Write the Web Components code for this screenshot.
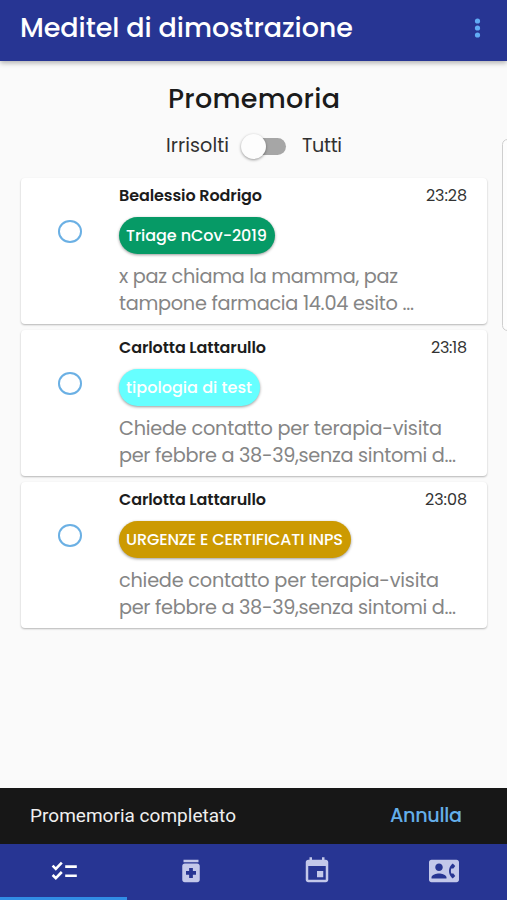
<!DOCTYPE html>
<html lang="it">
<head>
<meta charset="utf-8">
<title>Meditel di dimostrazione</title>
<style>
    html, body{
        margin: 0;
        height: 100%;
        overflow: hidden;
        background-color: #fafafa;
        font-family: Poppins, Inter, "Open Sans", sans-serif;
    }
</style>
</head>
<body>
<meditel-app></meditel-app>

<script>
function makeTemplate(html){
    const template = document.createElement('template')
    template.innerHTML = html
    return template
}

class BaseElement extends HTMLElement {
    constructor(){
        super();
        this.attachShadow({mode: 'open'});
        this.shadowRoot.appendChild(this.constructor.template.content.cloneNode(true));
    }
}

/* One line of text, tracked so that it takes up the given width */
class FitText extends BaseElement {
    static template = makeTemplate(`
        <style>
        :host{
            display: inline-block;
            white-space: nowrap;
        }
        span{
            display: inline-block;
        }
        </style>
        <span><slot></slot></span>
    `)

    connectedCallback(){
        const span = this.shadowRoot.querySelector('span');
        const width = Number(this.getAttribute('width'));
        const count = this.textContent.length;
        const spacing = (width - span.getBoundingClientRect().width) / (count - 1);
        span.style.letterSpacing = spacing + 'px';
        span.style.marginRight = -spacing + 'px';
    }
}

class AppBar extends BaseElement {
    static template = makeTemplate(`
        <style>
        :host{
            display: flex;
            justify-content: space-between;
            align-items: center;
            box-sizing: border-box;
            height: 61px;
            padding: 0 26px 5px 20px;
            background-color: #273593;
            color: #fff;
            font-size: 27px;
            font-weight: 500;
            line-height: 36px;
            box-shadow: 0 2px 5px rgba(0,0,0,0.3);
            z-index: 1;
        }
        svg{
            display: block;
            fill: #61acf5;
        }
        </style>
        <slot></slot>
        <svg width="7" height="20" viewBox="0 0 7 20">
            <circle cx="3.5" cy="3" r="2.6"/>
            <circle cx="3.5" cy="10" r="2.6"/>
            <circle cx="3.5" cy="17" r="2.6"/>
        </svg>
    `)
}

class FilterSwitch extends BaseElement {
    static template = makeTemplate(`
        <style>
        :host{
            display: flex;
            justify-content: center;
            align-items: center;
            height: 26px;
            font-size: 19.2px;
            line-height: 26px;
            color: #303030;
        }
        .track{
            display: flex;
            align-items: center;
            width: 41px;
            height: 17px;
            margin: 0 16px 0 16px;
            border-radius: 9px;
            background-color: #a6a6a6;
        }
        .thumb{
            flex: none;
            width: 25px;
            height: 25px;
            margin-left: -4px;
            border-radius: 50%;
            background-color: #fdfdfd;
            box-shadow: 0 1px 3px rgba(0,0,0,0.4);
        }
        </style>
        <slot name="off"></slot>
        <div class="track"><div class="thumb"></div></div>
        <slot name="on"></slot>
    `)
}

class ReminderCard extends BaseElement {
    static template = makeTemplate(`
        <style>
        :host{
            display: grid;
            grid-template-columns: 98px 1fr;
            box-sizing: border-box;
            height: 146px;
            padding: 8px 20px 0 0;
            border-radius: 4px;
            background-color: #fff;
            box-shadow: 0 1px 2px rgba(0,0,0,0.28);
        }
        .check{
            width: 20.5px;
            height: 19px;
            margin: 33.5px 0 0 36.5px;
            border: 2.4px solid #6bb0e4;
            border-radius: 50%;
        }
        .top{
            display: flex;
            justify-content: space-between;
            height: 20px;
            line-height: 20px;
            font-size: 16px;
            color: #1c1c1c;
        }
        .name{
            font-weight: 600;
        }
        .time{
            color: #333;
        }
        .chip{
            display: inline-flex;
            align-items: center;
            height: 37px;
            padding: 0 8px 0 7px;
            margin-top: 11px;
            border-radius: 19px;
            background-color: var(--chip);
            color: #fff;
            font-size: 16px;
            font-weight: 500;
            box-shadow: 0 1px 3px rgba(0,0,0,0.4);
        }
        .text{
            display: flex;
            flex-direction: column;
            align-items: flex-start;
            margin-top: 9px;
            font-size: 19.3px;
            line-height: 27px;
            color: #858585;
        }
        .chip-row{
            display: flex;
        }
        </style>
        <div class="check"></div>
        <div>
            <div class="top">
                <div class="name"><slot name="name"></slot></div>
                <div class="time"><slot name="time"></slot></div>
            </div>
            <div class="chip-row">
                <div class="chip"><slot name="chip"></slot></div>
            </div>
            <div class="text"><slot></slot></div>
        </div>
    `)
}

class SnackBar extends BaseElement {
    static template = makeTemplate(`
        <style>
        :host{
            display: flex;
            justify-content: space-between;
            align-items: center;
            box-sizing: border-box;
            height: 56px;
            padding: 0 45px 0 30px;
            background-color: #171717;
            color: #efefef;
            font-family: Roboto, sans-serif;
            font-size: 19px;
            line-height: 24px;
        }
        ::slotted([slot=action]){
            font-family: Poppins, Inter, "Open Sans", sans-serif;
            font-size: 19.2px;
            font-weight: 500;
            color: #64aee9;
        }
        </style>
        <slot></slot>
        <slot name="action"></slot>
    `)
}

class TabBar extends BaseElement {
    static template = makeTemplate(`
        <style>
        :host{
            display: grid;
            grid-template-columns: repeat(4, 1fr);
            height: 56px;
            background-color: #273593;
        }
        .tab{
            display: flex;
            justify-content: center;
            align-items: center;
            box-sizing: border-box;
            border-bottom: 3px solid transparent;
            padding: 1px 0 0 1px;
            color: #c3c8ea;
        }
        .tab.active{
            color: #fff;
            border-color: #318de6;
        }
        svg{
            display: block;
            width: 30px;
            height: 30px;
            fill: currentColor;
        }
        .lines{
            fill: none;
            stroke: currentColor;
            stroke-width: 2.6;
        }
        </style>
        <div class="tab active">
            <svg class="lines" viewBox="0 0 30 30">
                <path d="M3.6 9.7l3.2 3.2 6-6.2M3.6 19l3.2 3.2 6-6.2M16.2 10.6h11.6M16.2 19.8h11.6"/>
            </svg>
        </div>
        <div class="tab">
            <svg viewBox="0 0 24 24">
                <path d="M6 3h12v2H6zM17 6H7c-1.1 0-2 .9-2 2v11c0 1.1.9 2 2 2h10c1.1 0 2-.9 2-2V8c0-1.1-.9-2-2-2zm-1 9h-2.5v2.5h-3V15H8v-3h2.5V9.5h3V12H16v3z"/>
            </svg>
        </div>
        <div class="tab">
            <svg viewBox="0 0 24 24">
                <path d="M17 12h-5v5h5v-5zM16 1v2H8V1H6v2H5c-1.11 0-1.99.9-1.99 2L3 19c0 1.1.89 2 2 2h14c1.1 0 2-.9 2-2V5c0-1.1-.9-2-2-2h-1V1h-2zm3 18H5V8h14v11z"/>
            </svg>
        </div>
        <div class="tab">
            <svg viewBox="0 0 24 24">
                <path d="M22 3H2C.9 3 0 3.9 0 5v14c0 1.1.9 2 2 2h20c1.1 0 1.99-.9 1.99-2L24 5c0-1.1-.9-2-2-2zM8 6c1.66 0 3 1.34 3 3s-1.34 3-3 3-3-1.34-3-3 1.34-3 3-3zm6 12H2v-1c0-2 4-3.1 6-3.1s6 1.1 6 3.1v1zm3.85-4h1.64L21 16l-1.99 1.99c-1.31-.98-2.28-2.38-2.73-3.99-.18-.64-.28-1.31-.28-2s.1-1.36.28-2c.45-1.62 1.42-3.01 2.73-3.99L21 8l-1.51 2h-1.64c-.22.63-.35 1.3-.35 2s.13 1.37.35 2z"/>
            </svg>
        </div>
    `)
}

class MeditelApp extends BaseElement {
    static template = makeTemplate(`
        <style>
        :host{
            display: flex;
            flex-direction: column;
            position: relative;
            height: 100vh;
            overflow: hidden;
        }
        main{
            flex: 1;
            padding: 19px 20px 0 21px;
        }
        h1{
            margin: 0 0 15px;
            text-align: center;
            font-size: 27px;
            font-weight: 500;
            line-height: 38px;
            color: #1b1b1b;
        }
        .list{
            display: flex;
            flex-direction: column;
            gap: 6px;
            margin-top: 19px;
        }
        /* edge panel handle, floats over the page */
        .handle{
            position: absolute;
            top: 139px;
            right: -6px;
            box-sizing: border-box;
            width: 11px;
            height: 192px;
            border: 1px solid #cfcfcf;
            border-radius: 6px;
            background-color: #fdfdfd;
        }
        </style>
        <app-bar><fit-text width="333">Meditel di dimostrazione</fit-text></app-bar>
        <main>
            <h1><fit-text width="172">Promemoria</fit-text></h1>
            <filter-switch>
                <fit-text slot="off" width="63">Irrisolti</fit-text>
                <fit-text slot="on" width="40">Tutti</fit-text>
            </filter-switch>
            <div class="list">
                <reminder-card style="--chip: #069a66">
                    <fit-text slot="name" width="143">Bealessio Rodrigo</fit-text>
                    <fit-text slot="time" width="41">23:28</fit-text>
                    <fit-text slot="chip" width="141">Triage nCov-2019</fit-text>
                    <fit-text width="279">x paz chiama la mamma, paz</fit-text>
                    <fit-text width="295">tampone farmacia 14.04 esito ...</fit-text>
                </reminder-card>
                <reminder-card style="--chip: #66ffff">
                    <fit-text slot="name" width="147">Carlotta Lattarullo</fit-text>
                    <fit-text slot="time" width="36">23:18</fit-text>
                    <fit-text slot="chip" width="126">tipologia di test</fit-text>
                    <fit-text width="323">Chiede contatto per terapia-visita</fit-text>
                    <fit-text width="337">per febbre a 38-39,senza sintomi d...</fit-text>
                </reminder-card>
                <reminder-card style="--chip: #cc9a02">
                    <fit-text slot="name" width="147">Carlotta Lattarullo</fit-text>
                    <fit-text slot="time" width="42">23:08</fit-text>
                    <fit-text slot="chip" width="217">URGENZE E CERTIFICATI INPS</fit-text>
                    <fit-text width="320">chiede contatto per terapia-visita</fit-text>
                    <fit-text width="337">per febbre a 38-39,senza sintomi d...</fit-text>
                </reminder-card>
            </div>
        </main>
        <snack-bar>
            <fit-text width="206">Promemoria completato</fit-text>
            <fit-text slot="action" width="72">Annulla</fit-text>
        </snack-bar>
        <tab-bar></tab-bar>
        <div class="handle"></div>
    `)
}

window.customElements.define('app-bar', AppBar)
window.customElements.define('filter-switch', FilterSwitch)
window.customElements.define('reminder-card', ReminderCard)
window.customElements.define('snack-bar', SnackBar)
window.customElements.define('tab-bar', TabBar)
window.customElements.define('meditel-app', MeditelApp)
// last, so that the text is measured in its final styles
window.customElements.define('fit-text', FitText)
</script>
</body>
</html>
